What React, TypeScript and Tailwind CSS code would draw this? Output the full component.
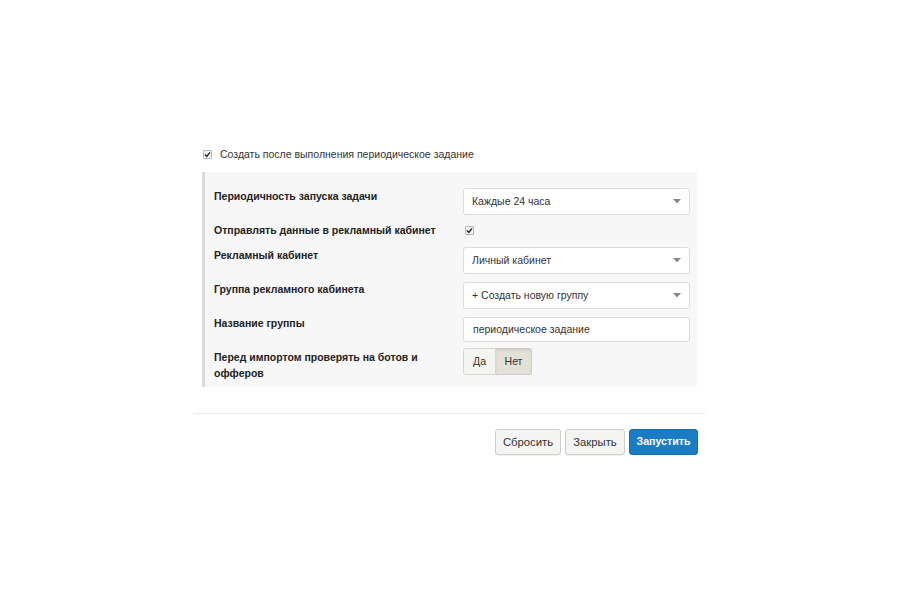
import React from "react";

function Check() {
  return (
    <span className="inline-flex w-[9px] h-[9px] border border-[#b5b5b5] rounded-[1px] bg-[#f3f3f3] items-center justify-center shrink-0">
      <svg width="7" height="7" viewBox="0 0 7 7">
        <path d="M1 3.6 L2.8 5.4 L6 1.4" stroke="#222" strokeWidth="1.4" fill="none" />
      </svg>
    </span>
  );
}

function Select({ value }: { value: string }) {
  return (
    <div className="w-[227px] h-[27px] bg-white border border-[#dcdcdc] rounded-[3px] flex items-center justify-between pl-[8px] pr-[8px] text-[10.5px] text-[#333]">
      <span>{value}</span>
      <svg width="8" height="5" viewBox="0 0 8 5">
        <path d="M0 0 L8 0 L4 4.5 Z" fill="#888" />
      </svg>
    </div>
  );
}

function Label({ children, cls = "" }: { children: React.ReactNode; cls?: string }) {
  return <div className={"w-[249px] shrink-0 font-bold text-[10.5px] leading-[16px] text-[#222] " + cls}>{children}</div>;
}

export default function App() {
  return (
    <div className="w-[900px] h-[600px] bg-white" style={{ fontFamily: '"Liberation Sans", Arial, sans-serif' }}>
      <div className="mx-auto w-[512px] pt-[146px]">
        <div className="flex items-center h-[16px] pl-[9px] gap-[8px] text-[10.5px] text-[#333]">
          <Check />
          <span className="pt-[2px]">Создать после выполнения периодическое задание</span>
        </div>
        <div className="mt-[10px] ml-[8px] w-[495px] bg-[#f7f7f7] border-l-[3px] border-[#d9d9d9] pl-[9px] pr-[7px] pt-[16px] pb-[10px] flex flex-col">
          <div className="flex h-[27px]">
            <Label>Периодичность запуска задачи</Label>
            <Select value="Каждые 24 часа" />
          </div>
          <div className="flex mt-[7px] h-[16px] items-center">
            <Label>Отправлять данные в рекламный кабинет</Label>
            <div className="pl-[2px] flex items-center"><Check /></div>
          </div>
          <div className="flex mt-[9px] h-[27px]">
            <Label>Рекламный кабинет</Label>
            <Select value="Личный кабинет" />
          </div>
          <div className="flex mt-[8px] h-[27px]">
            <Label cls="-mt-[1px]">Группа рекламного кабинета</Label>
            <Select value="+ Создать новую группу" />
          </div>
          <div className="flex mt-[8px] h-[25px]">
            <Label cls="-mt-[2px]">Название группы</Label>
            <div className="w-[227px] h-[25px] bg-white border border-[#dcdcdc] rounded-[3px] flex items-center pl-[9px] text-[10.5px] text-[#333]">
              периодическое задание
            </div>
          </div>
          <div className="flex mt-[6px] h-[29px]">
            <Label cls="pt-[1px] leading-[15px]">Перед импортом проверять на ботов и офферов</Label>
            <div className="flex h-[27px] text-[10.5px] text-[#333]">
              <div className="w-[33px] h-full flex items-center justify-center bg-[#f4f4f1] border border-[#d6d6d0] rounded-l-[3px]">Да</div>
              <div className="w-[36px] h-full flex items-center justify-center bg-[#e4e2d8] border border-l-0 border-[#cfcdc3] rounded-r-[3px] shadow-[inset_0_2px_3px_rgba(0,0,0,0.08)]">Нет</div>
            </div>
          </div>
        </div>
        <div className="mt-[26px] h-px bg-[#ececec]" />
        <div className="mt-[15px] flex justify-end gap-[4px] pr-[8px] text-[11.3px]">
          <div className="w-[66px] h-[26px] flex items-center justify-center bg-[#f4f4f2] border border-[#cccccc] rounded-[3px] text-[#333] shadow-[0_1px_1px_rgba(0,0,0,0.06)]">Сбросить</div>
          <div className="w-[60px] h-[26px] flex items-center justify-center bg-[#f4f4f2] border border-[#cccccc] rounded-[3px] text-[#333] shadow-[0_1px_1px_rgba(0,0,0,0.06)]">Закрыть</div>
          <div className="w-[69px] h-[26px] flex items-center justify-center bg-[#1a7cc2] border border-[#176fae] rounded-[3px] text-white font-semibold text-[10.6px]">Запустить</div>
        </div>
      </div>
    </div>
  );
}
